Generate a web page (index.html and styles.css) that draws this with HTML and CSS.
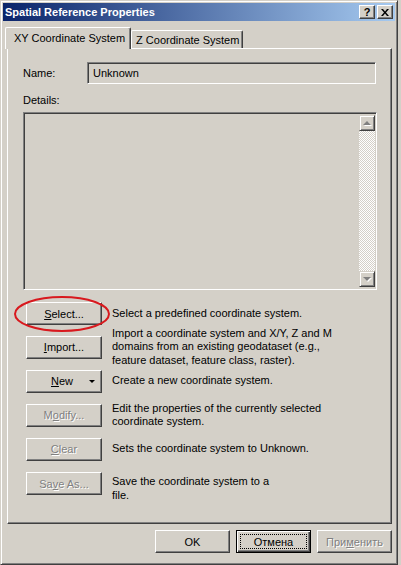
FILE: index.html
```html
<!DOCTYPE html>
<html lang="en">
<head>
    <meta charset="UTF-8">
    <meta name="viewport" content="width=device-width, initial-scale=1.0">
    <title>Spatial Reference Properties</title>
    <link rel="stylesheet" href="styles.css">
</head>
<body>
    <div class="window">
        <div class="titlebar">
            <span class="title">Spatial Reference Properties</span>
            <div class="caption-buttons">
                <span class="cap-btn help">?</span>
                <span class="cap-btn">
                    <svg width="8" height="7" viewBox="0 0 8 7"><path d="M0 0h2l2 2.5 2-2.5h2l-3 3.5 3 3.5h-2l-2-2.5-2 2.5h-2l3-3.5z" fill="#000"/></svg>
                </span>
            </div>
        </div>
        <div class="content">
            <div class="tabs">
                <div class="tab active">XY Coordinate System</div>
                <div class="tab">Z Coordinate System</div>
            </div>
            <div class="panel">
                <div class="name-row">
                    <span class="label">Name:</span>
                    <div class="textbox">Unknown</div>
                </div>
                <div class="label details-label">Details:</div>
                <div class="details">
                    <div class="scrollbar">
                        <div class="scroll-btn"><span class="arrow up"></span></div>
                        <div class="track"></div>
                        <div class="scroll-btn"><span class="arrow down"></span></div>
                    </div>
                </div>
                <div class="actions">
                    <div class="action first">
                        <svg class="highlight" width="100" height="40" viewBox="0 0 100 40"><ellipse cx="49" cy="19" rx="47" ry="17" fill="none" stroke="#d8191e" stroke-width="2"/></svg>
                        <button class="btn"><u>S</u>elect...</button>
                        <p>Select a predefined coordinate system.</p>
                    </div>
                    <div class="action">
                        <button class="btn"><u>I</u>mport...</button>
                        <p>Import a coordinate system and X/Y, Z and M<br>domains from an existing geodataset (e.g.,<br>feature dataset, feature class, raster).</p>
                    </div>
                    <div class="action">
                        <button class="btn split"><span class="btn-text"><u>N</u>ew</span><span class="drop"></span></button>
                        <p>Create a new coordinate system.</p>
                    </div>
                    <div class="action">
                        <button class="btn" disabled>M<u>o</u>dify...</button>
                        <p>Edit the properties of the currently selected<br>coordinate system.</p>
                    </div>
                    <div class="action">
                        <button class="btn" disabled><u>C</u>lear</button>
                        <p>Sets the coordinate system to Unknown.</p>
                    </div>
                    <div class="action last">
                        <button class="btn" disabled>Sa<u>v</u>e As...</button>
                        <p>Save the coordinate system to a<br>file.</p>
                    </div>
                </div>
            </div>
            <div class="footer">
                <button class="btn wide">OK</button>
                <button class="btn wide default"><span class="focus">Отмена</span></button>
                <button class="btn wide" disabled>При<u>м</u>енить</button>
            </div>
        </div>
    </div>
</body>
</html>
```

FILE: styles.css
```css
body {
    margin: 0;
    background-color: #d4d0c8;
    font-family: "Liberation Sans", Arial, sans-serif;
    font-size: 11px;
    color: #000;
}
.window {
    box-sizing: border-box;
    width: 398px;
    height: 565px;
    padding: 1px;
    border: 1px solid;
    border-color: #d4d0c8 #404040 #404040 #d4d0c8;
    box-shadow: inset 1px 1px #fff, inset -1px -1px #808080;
    background: #d4d0c8;
}
.titlebar {
    height: 18px;
    margin: 1px;
    display: flex;
    align-items: center;
    justify-content: space-between;
    background: linear-gradient(to right, #0a246a, #a6caf0);
}
.title {
    padding-left: 2px;
    color: #fff;
    font-weight: bold;
    font-size: 11px;
}
.caption-buttons {
    display: flex;
    gap: 2px;
    padding-right: 2px;
}
.cap-btn {
    box-sizing: border-box;
    width: 16px;
    height: 14px;
    display: flex;
    align-items: center;
    justify-content: center;
    background: #d4d0c8;
    border: 1px solid;
    border-color: #fff #404040 #404040 #fff;
    box-shadow: inset -1px -1px #808080;
}
.cap-btn.help {
    font-weight: bold;
    font-size: 11px;
    line-height: 1;
}
.content {
    padding: 0 4px 0 5px;
}
.tabs {
    display: flex;
    align-items: flex-end;
    margin: 6px 0 0 -2px;
}
.tab {
    box-sizing: border-box;
    height: 18px;
    padding: 0 3px 0 4px;
    display: flex;
    align-items: center;
    border: 1px solid;
    border-bottom: none;
    border-color: #fff #404040 #fff #fff;
    border-radius: 2px 2px 0 0;
    box-shadow: inset -1px 0 #808080;
}
.tab.active {
    height: 22px;
    margin-bottom: -1px;
    padding: 0 5px 2px 8px;
    background: #d4d0c8;
    position: relative;
    z-index: 1;
}
.panel {
    box-sizing: border-box;
    height: 476px;
    padding: 13px 14px 0 15px;
    border: 1px solid;
    border-color: #fff #404040 #404040 #fff;
    box-shadow: inset -1px -1px #808080;
}
.name-row {
    display: flex;
    align-items: center;
}
.name-row .label {
    width: 64px;
}
.textbox {
    box-sizing: border-box;
    width: 289px;
    height: 22px;
    padding: 0 5px;
    display: flex;
    align-items: center;
    border: 1px solid;
    border-color: #808080 #fff #fff #808080;
    box-shadow: inset 1px 1px #404040, inset -1px -1px #d4d0c8;
}
.details-label {
    display: block;
    margin-top: 10px;
    line-height: 13px;
}
.details {
    box-sizing: border-box;
    height: 178px;
    margin-top: 5px;
    padding: 2px 1px 2px 2px;
    display: flex;
    justify-content: flex-end;
    border: 1px solid;
    border-color: #808080 #fff #fff #808080;
    box-shadow: inset 1px 1px #404040, inset -1px -1px #d4d0c8;
}
.scrollbar {
    width: 16px;
    display: flex;
    flex-direction: column;
}
.scroll-btn {
    box-sizing: border-box;
    height: 16px;
    display: flex;
    align-items: center;
    justify-content: center;
    border: 1px solid;
    border-color: #d4d0c8 #404040 #404040 #d4d0c8;
    box-shadow: inset 1px 1px #fff, inset -1px -1px #808080;
}
.arrow {
    width: 0;
    height: 0;
    border-left: 4px solid transparent;
    border-right: 4px solid transparent;
}
.arrow.up {
    border-bottom: 4px solid #808080;
    filter: drop-shadow(1px 1px 0 #fff);
}
.arrow.down {
    border-top: 4px solid #808080;
    filter: drop-shadow(1px 1px 0 #fff);
}
.track {
    flex: 1;
    background: repeating-conic-gradient(#fff 0 25%, #d4d0c8 0 50%) 0 0 / 2px 2px;
}
.actions {
    margin-top: 6px;
    padding-left: 3px;
}
.action {
    height: 34px;
    display: flex;
    align-items: center;
    gap: 10px;
    position: relative;
}
.action p {
    margin: 0;
    line-height: 13.5px;
    white-space: nowrap;
}
.action.first {
    padding-top: 1px;
    box-sizing: border-box;
}
.action.last {
    align-items: flex-start;
    padding-top: 6px;
    box-sizing: border-box;
}
.action.last p {
    padding-top: 3px;
}
.highlight {
    position: absolute;
    left: -13px;
    top: -1px;
}
.btn {
    box-sizing: border-box;
    width: 76px;
    height: 23px;
    flex-shrink: 0;
    padding: 0;
    font-family: inherit;
    font-size: 11px;
    color: #000;
    background: #d4d0c8;
    border: 1px solid;
    border-color: #fff #404040 #404040 #fff;
    box-shadow: inset -1px -1px #808080;
}
.btn:disabled {
    color: #808080;
    text-shadow: 1px 1px #fff;
}
.btn.split {
    display: flex;
    align-items: center;
}
.btn-text {
    flex: 1;
    padding-left: 8px;
}
.drop {
    width: 0;
    height: 0;
    margin-right: 6px;
    border-left: 3px solid transparent;
    border-right: 3px solid transparent;
    border-top: 3px solid #000;
}
.footer {
    display: flex;
    justify-content: flex-end;
    gap: 6px;
    margin-top: 6px;
}
.btn.wide {
    width: 75px;
}
.btn.default {
    border: 1px solid #000;
    box-shadow: inset 1px 1px #fff, inset -1px -1px #404040, inset -2px -2px #808080;
    padding: 3px;
}
.focus {
    display: flex;
    align-items: center;
    justify-content: center;
    height: 100%;
    outline: 1px dotted #000;
    outline-offset: -1px;
}
```
